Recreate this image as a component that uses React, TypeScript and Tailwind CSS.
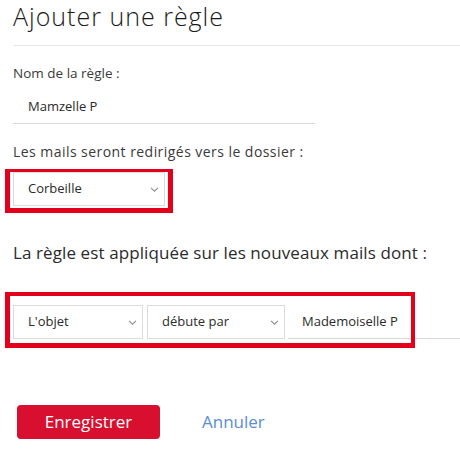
import React from "react"

const Chevron = () => (
  <svg width="9" height="5" viewBox="0 0 9 5" fill="none" className="shrink-0">
    <path d="M1 0.8l3.5 3.4 3.5-3.4" stroke="#8f8f8f" strokeWidth="1.1" />
  </svg>
)

interface ISelectBox {
  label: string
  className: string
}

const SelectBox: React.FC<ISelectBox> = ({ label, className }) => (
  <div className={`flex h-[34px] items-center justify-between border border-[#dcdcdc] bg-white pl-[14px] pr-[5px] text-[13px] ${className}`}>
    <span>{label}</span>
    <Chevron />
  </div>
)

const App: React.FC = () => {
  return (
    <div className="w-[460px] h-[457px] overflow-hidden bg-white text-[#2b2b2b] font-['Open_Sans',sans-serif]">
      <h1 className="pl-[13px] text-[25px] font-light leading-[32px] tracking-[1px] text-[#1a1a1a]">Ajouter une règle</h1>
      <div className="ml-[13px] mt-[13px] h-px bg-[#e8e8e8]" />

      <div className="pl-[13px] mt-[17px] text-[13.5px] leading-[20px] text-[#3a3a3a]">Nom de la règle :</div>
      <div className="ml-[13px] mt-[13px] w-[302px] border-b border-[#d9d9d9] pl-[15px] pb-[7px] text-[13px] leading-[20px]">
        Mamzelle P
      </div>

      <div className="pl-[13px] mt-[18px] text-[14px] leading-[20px] tracking-[0.45px] text-[#3a3a3a]">
        Les mails seront redirigés vers le dossier :
      </div>
      <div className="ml-[5px] mt-[7px] w-[168px] border-[#e2001a] border-t-[3px] border-x-[5px] border-b-[5px] px-[3px] pb-[2px]">
        <SelectBox label="Corbeille" className="w-full" />
      </div>

      <div className="pl-[13px] mt-[28px] text-[17px] leading-[24px] tracking-[0.1px] text-[#2b2b2b]">
        La règle est appliquée sur les nouveaux mails dont :
      </div>

      <div className="mt-[27px] flex items-end">
        <div className="ml-[5px] flex w-[410px] border-[#e2001a] border-t-[4px] border-l-[5px] border-r-[4px] border-b-[5px] pl-[3px] pt-[9px] pb-[4px]">
          <SelectBox label="L'objet" className="w-[130px]" />
          <SelectBox label="débute par" className="ml-[4px] w-[138px]" />
          <div className="ml-[3px] flex h-[34px] flex-1 items-center border-b border-[#d9d9d9] pl-[14px] text-[13px]">
            Mademoiselle P
          </div>
        </div>
        <div className="mb-[9px] h-px flex-1 bg-[#d9d9d9]" />
      </div>

      <div className="ml-[17px] mt-[57px] flex items-center gap-[42px]">
        <button className="h-[34px] w-[143px] rounded-[4px] bg-[#d80f2e] text-[17px] text-white">Enregistrer</button>
        <button className="text-[17px] text-[#5b8dd9]">Annuler</button>
      </div>
    </div>
  )
}

export default App
